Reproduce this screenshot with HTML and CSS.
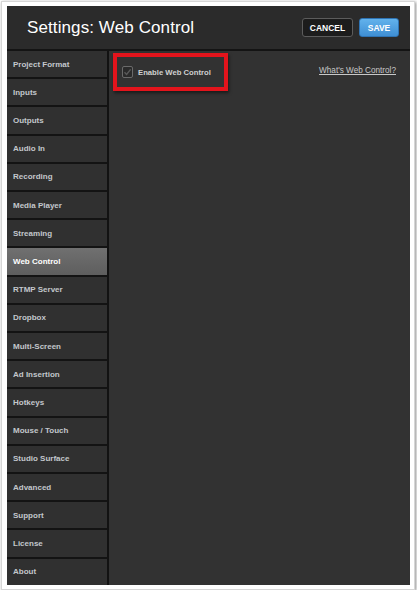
FILE: index.html
```html
<!DOCTYPE html>
<html>
<head>
<meta charset="utf-8">
<link rel="stylesheet" href="styles.css">
</head>
<body>
<div class="frame">
  <div class="window">
    <header class="header">
      <h1 class="title">Settings: Web Control</h1>
      <div class="actions">
        <button class="btn btn-cancel">CANCEL</button>
        <button class="btn btn-save">SAVE</button>
      </div>
    </header>
    <div class="body">
      <nav class="sidebar">
        <div class="nav-item">Project Format</div>
        <div class="nav-item">Inputs</div>
        <div class="nav-item">Outputs</div>
        <div class="nav-item">Audio In</div>
        <div class="nav-item">Recording</div>
        <div class="nav-item">Media Player</div>
        <div class="nav-item">Streaming</div>
        <div class="nav-item active">Web Control</div>
        <div class="nav-item">RTMP Server</div>
        <div class="nav-item">Dropbox</div>
        <div class="nav-item">Multi-Screen</div>
        <div class="nav-item">Ad Insertion</div>
        <div class="nav-item">Hotkeys</div>
        <div class="nav-item">Mouse / Touch</div>
        <div class="nav-item">Studio Surface</div>
        <div class="nav-item">Advanced</div>
        <div class="nav-item">Support</div>
        <div class="nav-item">License</div>
        <div class="nav-item">About</div>
      </nav>
      <main class="content">
        <div class="highlight">
          <span class="checkbox">
            <svg width="11" height="12" viewBox="0 0 11 12"><path d="M2.5 6.2 L4.6 8.4 L8.6 3.4" fill="none" stroke="#5a5a5a" stroke-width="1.4"/></svg>
          </span>
          <span class="check-label">Enable Web Control</span>
        </div>
        <a class="help-link">What's Web Control?</a>
      </main>
    </div>
  </div>
</div>
</body>
</html>
```
FILE: styles.css
```css
html, body {
  margin: 0;
  padding: 0;
  background: #ffffff;
}
body {
  font-family: "Liberation Sans", Arial, sans-serif;
}
.frame {
  margin: 1px 0 0 1px;
  width: 403px;
  padding: 4px 4px 4px 5px;
  border: 1px solid #d6d6d6;
  box-shadow: 1px 1px 3px rgba(0,0,0,0.45);
  background: #fff;
}
.window {
  width: 403px;
  height: 579px;
  display: flex;
  flex-direction: column;
  background: #2c2c2c;
}
.header {
  height: 43px;
  flex: none;
  display: flex;
  align-items: center;
  justify-content: space-between;
  padding: 0 11px 0 20px;
  border-bottom: 2px solid #141414;
  background: #2b2b2b;
}
.title {
  margin: 0;
  font-size: 17px;
  font-weight: normal;
  color: #ffffff;
  letter-spacing: 0.1px;
}
.actions {
  display: flex;
  gap: 6px;
}
.btn {
  height: 19px;
  padding: 0;
  border-radius: 3px;
  font-family: "Liberation Sans", Arial, sans-serif;
  font-weight: bold;
  font-size: 8.5px;
  color: #fff;
}
.btn-cancel {
  width: 51px;
  background: #1c1c1c;
  border: 1px solid #5c5c5c;
}
.btn-save {
  width: 40px;
  background: linear-gradient(#62b2ec, #3f8fd4);
  border: 1px solid #2f74b4;
}
.body {
  flex: 1;
  display: flex;
  min-height: 0;
}
.sidebar {
  width: 100px;
  flex: none;
  display: flex;
  flex-direction: column;
  border-right: 2px solid #121212;
  background: #2f2f2f;
}
.nav-item {
  flex: 1;
  display: flex;
  align-items: center;
  padding-left: 6px;
  font-size: 8px;
  font-weight: bold;
  color: #c3c7cc;
  border-bottom: 2px solid #131313;
  background: #303030;
}
.nav-item:last-child {
  border-bottom: none;
}
.nav-item.active {
  background: linear-gradient(#707070, #5e5e5e);
  color: #ffffff;
}
.content {
  flex: 1;
  display: flex;
  justify-content: space-between;
  align-items: flex-start;
  padding: 2px 14px 0 4px;
  background: #323232;
}
.highlight {
  box-sizing: border-box;
  width: 115px;
  height: 38px;
  border: 4px solid #e3141c;
  box-shadow: 1px 2px 3px rgba(0,0,0,0.5);
  display: flex;
  align-items: center;
  gap: 5px;
  padding-left: 5px;
}
.checkbox {
  width: 11px;
  height: 12px;
  box-sizing: border-box;
  border: 1px solid #6a6a6a;
  border-radius: 2px;
  background: #2a2a2a;
  display: flex;
  align-items: center;
  justify-content: center;
}
.checkbox svg {
  display: block;
  flex: none;
}
.check-label {
  font-size: 7.7px;
  font-weight: bold;
  color: #d0d0d0;
}
.help-link {
  margin-top: 13px;
  font-size: 8.2px;
  color: #c8c8c8;
  text-decoration: underline;
}
```
